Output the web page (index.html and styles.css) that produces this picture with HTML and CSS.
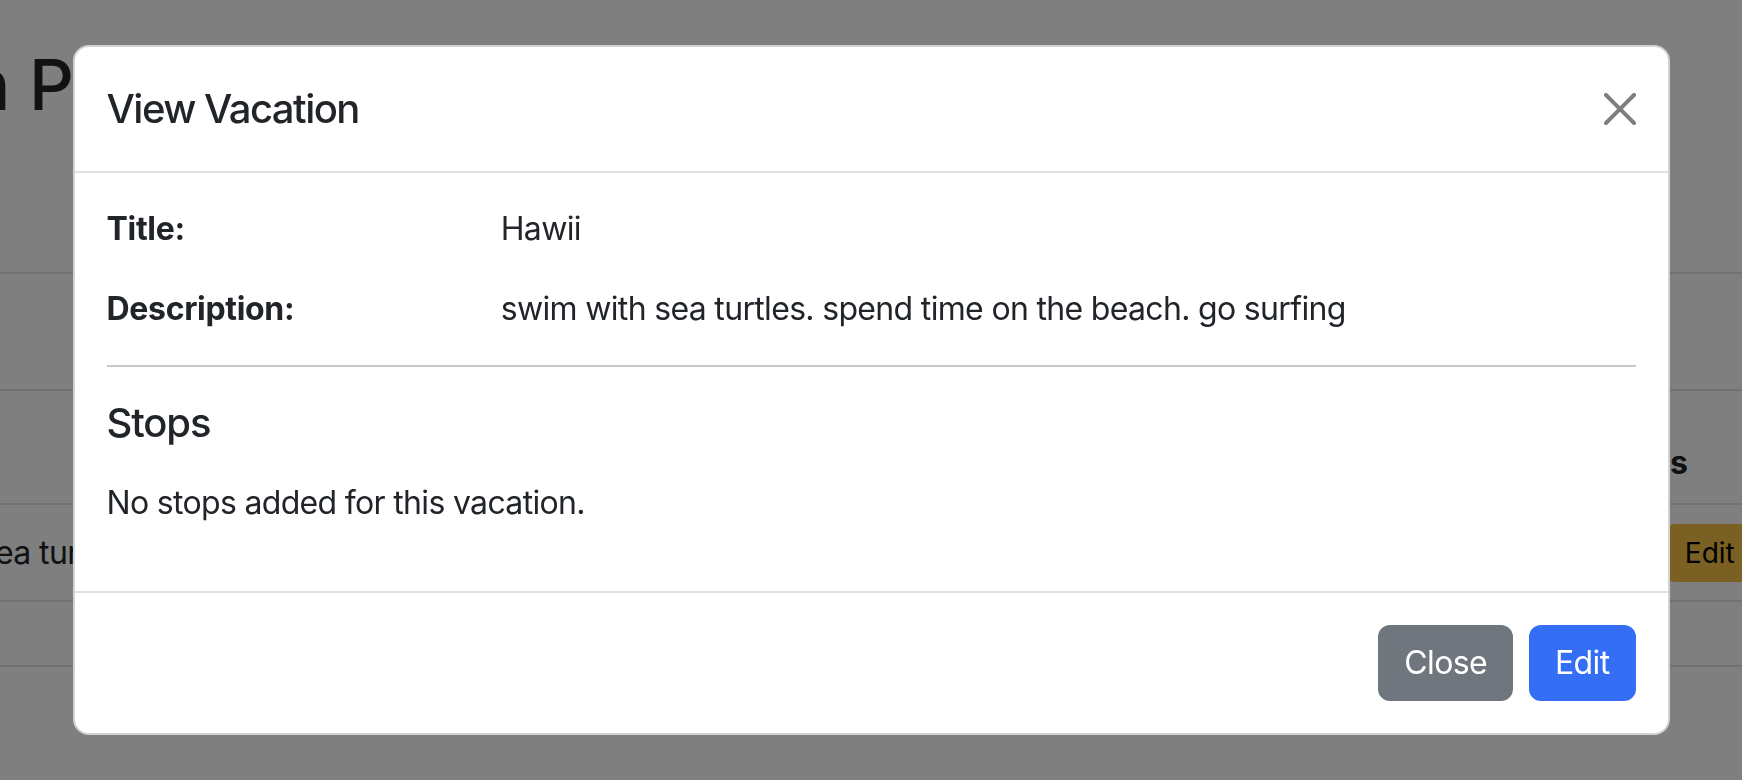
FILE: index.html
```html
<!DOCTYPE html>
<html lang="en">
<head>
<meta charset="utf-8">
<title>View Vacation</title>
<link rel="stylesheet" href="styles.css">
</head>
<body>
<div class="page">
  <h1 class="page-title">Vacation Planner</h1>
  <div class="page-row page-row-top"></div>
  <div class="page-row page-head">
    <div class="cell c-title">Title</div>
    <div class="cell c-desc">About</div>
    <div class="cell c-act">Actions</div>
  </div>
  <div class="page-row page-item">
    <div class="cell c-title">Hawii</div>
    <div class="cell c-desc">swim with sea turtles. spend time on the beach. go surfing</div>
    <div class="cell c-act"><span class="sm-btn sm-info">View</span><span class="sm-btn sm-warning">Edit</span></div>
  </div>
  <div class="page-row page-empty"></div>
</div>

<div class="backdrop"></div>

<div class="modal-wrap">
  <div class="modal">
    <div class="modal-header">
      <h5 class="modal-title">View Vacation</h5>
      <button class="btn-close" type="button" aria-label="Close">
        <svg viewBox="0 0 16 16" width="32" height="32"><path d="M.293.293a1 1 0 0 1 1.414 0L8 6.586 14.293.293a1 1 0 1 1 1.414 1.414L9.414 8l6.293 6.293a1 1 0 0 1-1.414 1.414L8 9.414l-6.293 6.293a1 1 0 0 1-1.414-1.414L6.586 8 .293 1.707a1 1 0 0 1 0-1.414z"/></svg>
      </button>
    </div>
    <div class="modal-body">
      <div class="info-row">
        <div class="info-label"><strong>Title:</strong></div>
        <div class="info-value">Hawii</div>
      </div>
      <div class="info-row">
        <div class="info-label"><strong>Description:</strong></div>
        <div class="info-value">swim with sea turtles. spend time on the beach. go surfing</div>
      </div>
      <hr class="divider">
      <h5 class="section-title">Stops</h5>
      <p class="empty-note">No stops added for this vacation.</p>
    </div>
    <div class="modal-footer">
      <button class="btn btn-secondary" type="button">Close</button>
      <button class="btn btn-primary" type="button">Edit</button>
    </div>
  </div>
</div>
</body>
</html>
```

FILE: styles.css
```css
* { box-sizing: border-box; }

html, body {
  margin: 0;
  padding: 0;
  width: 1742px;
  height: 780px;
  overflow: hidden;
  background: #fff;
  color: #212529;
  font-family: Inter, "Noto Sans", "Liberation Sans", sans-serif;
  font-size: 32px;
  line-height: 1.5;
}

/* ---------- page behind the dialog ---------- */
.page {
  margin-left: -300px;
  width: 2200px;
  padding-top: 40px;
}

.page-title {
  margin: 0 0 0 18px;
  padding-top: 3px;
  font-size: 70px;
  font-weight: 500;
  line-height: 1.2;
  height: 232px;
}

.page-row {
  display: flex;
  border-top: 2px solid #dee2e6;
}

.page-row-top { height: 117px; }

.page-head {
  height: 114px;
  align-items: flex-end;
  padding-bottom: 16px;
  font-weight: 700;
  letter-spacing: -0.01em;
}

.page-item {
  height: 97px;
  align-items: center;
}

.page-empty {
  height: 67px;
  border-bottom: 2px solid #dee2e6;
}

.cell {
  padding: 0 16px;
  white-space: nowrap;
}

.c-title { width: 109px; }
.c-desc { width: 1745px; letter-spacing: -0.02em; }
.c-act { display: flex; gap: 8px; }

.sm-btn {
  display: inline-block;
  padding: 6px 16px;
  font-size: 28px;
  line-height: 1.5;
  border-radius: 8px;
  border: 2px solid transparent;
  letter-spacing: 0;
}

.sm-info { background: #0dcaf0; padding: 6px 10px; }
.sm-warning { background: #f5c046; color: #000; }

/* ---------- backdrop ---------- */
.backdrop {
  position: fixed;
  inset: 0;
  background: rgba(0, 0, 0, 0.5);
}

/* ---------- modal ---------- */
.modal-wrap {
  position: fixed;
  inset: 0;
  display: flex;
  justify-content: center;
  align-items: flex-start;
  padding-top: 45px;
}

.modal {
  width: 1597px;
  background: #fff;
  border: 2px solid rgba(0, 0, 0, 0.175);
  border-radius: 16px;
  display: flex;
  flex-direction: column;
  letter-spacing: -0.021em;
}

.modal-header {
  display: flex;
  align-items: center;
  padding: 32px;
  border-bottom: 2px solid #dee2e6;
}

.modal-title {
  margin: 0;
  font-size: 40px;
  font-weight: 500;
  line-height: 1.5;
  letter-spacing: -0.038em;
}

.btn-close {
  margin: -16px -16px -16px auto;
  padding: 16px;
  border: 0;
  background: transparent;
  opacity: 0.5;
  line-height: 0;
  box-sizing: content-box;
  width: 32px;
  height: 32px;
}

.btn-close svg { display: block; fill: #000; }

.modal-body {
  padding: 32px;
}

.info-row {
  display: flex;
  margin: 0 -24px 32px;
}

.info-label { flex: 0 0 25%; padding: 0 24px; }
.info-value { flex: 0 0 75%; padding: 0 24px; }
.info-label strong { font-weight: 700; letter-spacing: -0.01em; }

.divider {
  margin: 32px 0;
  border: 0;
  border-top: 2px solid rgba(33, 37, 41, 0.25);
}

.section-title {
  margin: 0 0 32px;
  font-size: 40px;
  font-weight: 500;
  line-height: 1.2;
  letter-spacing: -0.028em;
}

.empty-note {
  margin: 0 0 32px;
}

.modal-footer {
  display: flex;
  justify-content: flex-end;
  align-items: center;
  padding: 24px;
  border-top: 2px solid #dee2e6;
}

.btn {
  margin: 8px;
  padding: 12px 24px;
  font-family: inherit;
  font-size: 32px;
  line-height: 48px;
  font-weight: 400;
  letter-spacing: -0.02em;
  color: #fff;
  border: 2px solid transparent;
  border-radius: 12px;
}

.btn-secondary { background: #6f767e; border-color: #6f767e; }
.btn-primary { background: #336ef5; border-color: #336ef5; }
```
